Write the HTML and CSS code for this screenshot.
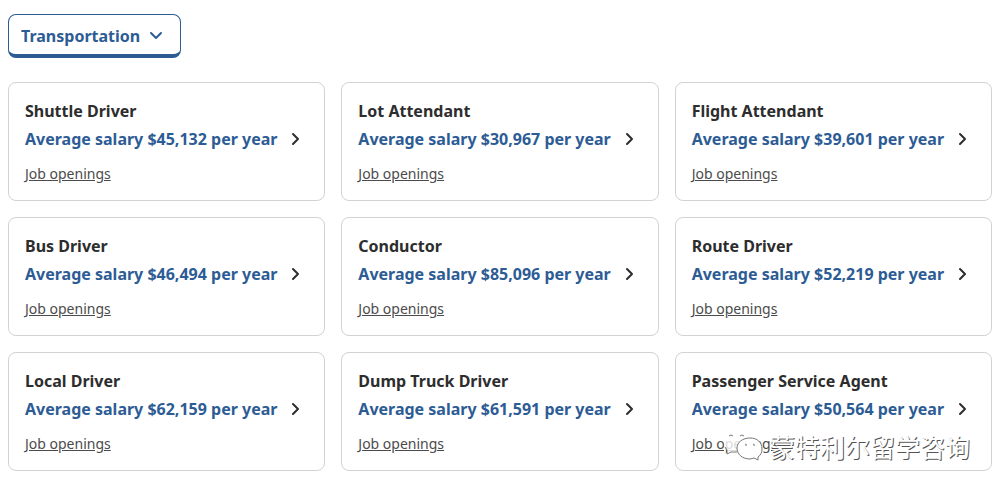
FILE: index.html
```html
<!DOCTYPE html>
<html lang="en">
<head>
    <meta charset="UTF-8">
    <meta name="viewport" content="width=device-width, initial-scale=1.0">
    <title>Transportation Salaries</title>
    <link rel="stylesheet" href="styles.css">
</head>
<body>
    <!-- Shared icons -->
    <svg class="icon-defs" aria-hidden="true">
        <symbol id="chevron" viewBox="0 0 10 14">
            <path d="M2 2l5 5-5 5" fill="none" stroke="currentColor" stroke-width="2" stroke-linecap="round" stroke-linejoin="round"/>
        </symbol>
    </svg>

    <!-- Category filter -->
    <div class="filter">
        <select class="filter-select" id="category" aria-label="Job category">
            <option>Transportation</option>
        </select>
        <svg class="filter-arrow" viewBox="0 0 14 10" aria-hidden="true">
            <path d="M2 2l5 5 5-5" fill="none" stroke="currentColor" stroke-width="2" stroke-linecap="round" stroke-linejoin="round"/>
        </svg>
    </div>

    <!-- Salary cards -->
    <main class="cards">
        <article class="card">
            <h2>Shuttle Driver</h2>
            <a class="salary" href="#">Average salary $45,132 per year <svg class="arrow"><use href="#chevron"/></svg></a>
            <a class="openings" href="#">Job openings</a>
        </article>
        <article class="card">
            <h2>Lot Attendant</h2>
            <a class="salary" href="#">Average salary $30,967 per year <svg class="arrow"><use href="#chevron"/></svg></a>
            <a class="openings" href="#">Job openings</a>
        </article>
        <article class="card">
            <h2>Flight Attendant</h2>
            <a class="salary" href="#">Average salary $39,601 per year <svg class="arrow"><use href="#chevron"/></svg></a>
            <a class="openings" href="#">Job openings</a>
        </article>
        <article class="card">
            <h2>Bus Driver</h2>
            <a class="salary" href="#">Average salary $46,494 per year <svg class="arrow"><use href="#chevron"/></svg></a>
            <a class="openings" href="#">Job openings</a>
        </article>
        <article class="card">
            <h2>Conductor</h2>
            <a class="salary" href="#">Average salary $85,096 per year <svg class="arrow"><use href="#chevron"/></svg></a>
            <a class="openings" href="#">Job openings</a>
        </article>
        <article class="card">
            <h2>Route Driver</h2>
            <a class="salary" href="#">Average salary $52,219 per year <svg class="arrow"><use href="#chevron"/></svg></a>
            <a class="openings" href="#">Job openings</a>
        </article>
        <article class="card">
            <h2>Local Driver</h2>
            <a class="salary" href="#">Average salary $62,159 per year <svg class="arrow"><use href="#chevron"/></svg></a>
            <a class="openings" href="#">Job openings</a>
        </article>
        <article class="card">
            <h2>Dump Truck Driver</h2>
            <a class="salary" href="#">Average salary $61,591 per year <svg class="arrow"><use href="#chevron"/></svg></a>
            <a class="openings" href="#">Job openings</a>
        </article>
        <article class="card">
            <h2>Passenger Service Agent</h2>
            <a class="salary" href="#">Average salary $50,564 per year <svg class="arrow"><use href="#chevron"/></svg></a>
            <a class="openings" href="#">Job openings</a>
        </article>

        <!-- Watermark over the last card -->
        <div class="watermark" lang="zh-CN">
            <svg class="watermark-logo" viewBox="0 0 46 34" aria-hidden="true">
                <path class="bubble-back" d="M14 1C6 1 0 6 0 13c0 4 1 6 3 8l0 4 5-2 6 1c9 0 16-4 16-11S23 1 14 1z"/>
                <path class="bubble-edge" d="M1 18l2 3 0 4 4-2 6 0M5 7q2-2 4 0M16 7q2-2 4 0"/>
                <path class="bubble-front" d="M26 9c-7 0-13 4-13 10s5 11 13 11l4-1 4 2 0-3c3-2 4-5 4-8 0-7-5-11-12-11z"/>
                <path class="bubble-edge" d="M21 15q2 0 1 2M29 15q2 0 1 2"/>
            </svg>
            <span>蒙特利尔留学咨询</span>
        </div>
    </main>
</body>
</html>
```
FILE: styles.css
```css
* {
    box-sizing: border-box;
}

body {
    margin: 0;
    padding: 14px 10px 20px 8px;
    font-family: "Noto Sans", "Noto Sans CJK SC", sans-serif;
    color: #2d2d2d;
    background: #fff;
}

.icon-defs {
    position: absolute;
    width: 0;
    height: 0;
}

/* Category filter */
.filter {
    position: relative;
    width: fit-content;
    margin-bottom: 24px;
    color: #2d5c95;
}

.filter-select {
    display: block;
    height: 44px;
    padding: 2px 39px 0 12px;
    appearance: none;
    font-family: inherit;
    font-size: 16px;
    font-weight: 700;
    color: inherit;
    background: #fff;
    border: 1px solid #2d5c95;
    border-bottom-width: 4px;
    border-radius: 8px;
    cursor: pointer;
}

.filter-arrow {
    position: absolute;
    top: 17px;
    right: 18px;
    width: 14px;
    height: 10px;
    pointer-events: none;
}

/* Salary cards */
.cards {
    position: relative;
    display: grid;
    grid-template-columns: repeat(3, 1fr);
    gap: 16px;
}

.card {
    padding: 16px;
    border: 1px solid #d4d2d0;
    border-radius: 8px;
}

.card h2 {
    margin: 0 0 4px;
    font-size: 16px;
    line-height: 24px;
}

.salary {
    display: flex;
    align-items: center;
    justify-content: space-between;
    margin-bottom: 12px;
    padding-right: 7px;
    font-size: 16px;
    font-weight: 700;
    line-height: 24px;
    color: #2d5c95;
    text-decoration: none;
}

.arrow {
    flex: none;
    width: 10px;
    height: 14px;
    color: #2d2d2d;
}

.openings {
    display: block;
    width: fit-content;
    font-size: 14px;
    line-height: 21px;
    color: #4b4b4b;
}

/* Watermark */
.watermark {
    position: absolute;
    right: 22px;
    bottom: 7px;
    display: flex;
    align-items: center;
    font-family: "Noto Sans CJK SC", sans-serif;
    font-size: 25px;
    line-height: 36px;
    color: #fff;
    text-shadow: 1px 1px 0 #555;
    pointer-events: none;
}

.watermark-logo {
    width: 46px;
    height: 34px;
}

.bubble-back {
    fill: #fff;
    fill-opacity: 0.8;
}

.bubble-front {
    fill: #fff;
    stroke: #777;
}

.bubble-edge {
    fill: none;
    stroke: #777;
}
```
